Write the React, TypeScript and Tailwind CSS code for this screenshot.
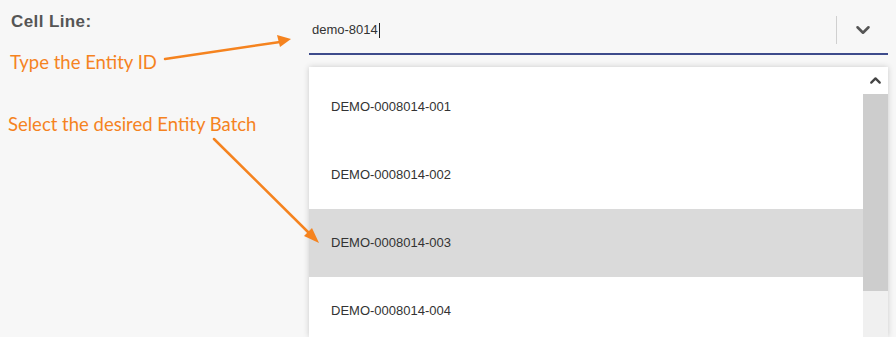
import { ChevronDown, ChevronUp } from 'lucide-react';

const batches = ['DEMO-0008014-001', 'DEMO-0008014-002', 'DEMO-0008014-003', 'DEMO-0008014-004'];

export default function App() {
  const selected = 'DEMO-0008014-003';

  return (
    <div className="relative w-[896px] h-[337px] overflow-hidden bg-[#f7f7f7] font-['Liberation_Sans',Arial,sans-serif]">
      <div className="flex h-full">
        {/* Left column: label and annotations */}
        <div className="w-[309px] shrink-0 pt-[12px] pl-[11px]">
          <h3 className="text-[17px] leading-[20px] font-bold tracking-[0.4px] text-[#555]">Cell Line:</h3>
          <p className="mt-[19px] -ml-[1px] text-[18.5px] leading-[22px] text-[#f5831f] font-['Lato',sans-serif]">Type the Entity ID</p>
          <p className="mt-[40px] -ml-[3px] text-[18.5px] leading-[22px] text-[#f5831f] font-['Lato',sans-serif]">Select the desired Entity Batch</p>
        </div>

        {/* Right column: combobox */}
        <div className="w-[579px] shrink-0 flex flex-col min-h-0">
          <div className="h-[55px] shrink-0 flex items-center pt-[5px] border-b-2 border-[#3d4b8b]">
            <div className="flex-1 pl-[3px] pt-[2px] text-[13px] text-[#333]">
              demo-8014<span className="inline-block w-px h-[15px] bg-[#222] align-middle ml-px" />
            </div>
            <div className="w-px h-[28px] bg-[#d0d0d0] mt-[2px]" />
            <div className="w-[51px] flex justify-center pt-[2px] text-[#555]">
              <ChevronDown size={22} strokeWidth={2.8} />
            </div>
          </div>

          <div className="mt-[12px] flex-1 min-h-0 overflow-hidden flex bg-white shadow-[0_0_6px_rgba(0,0,0,0.18)]">
            <ul className="flex-1 pt-[6px]">
              {batches.map((b) => (
                <li
                  key={b}
                  className={`h-[68px] flex items-center pl-[22px] text-[13px] text-[#333] ${b === selected ? 'bg-[#dadada]' : ''}`}
                >
                  {b}
                </li>
              ))}
            </ul>
            <div className="w-[25px] flex flex-col bg-[#f0f0f0]">
              <div className="h-[27px] shrink-0 flex items-center justify-center bg-white text-[#444]">
                <ChevronUp size={17} strokeWidth={3.2} />
              </div>
              <div className="h-[197px] shrink-0 bg-[#cdcdcd]" />
            </div>
          </div>
        </div>
      </div>

      {/* Annotation arrows */}
      <svg className="absolute inset-0 pointer-events-none" width="896" height="337" viewBox="0 0 896 337">
        <g stroke="#f5831f" strokeWidth="2.5" fill="none" strokeLinecap="round">
          <line x1="165" y1="59" x2="280" y2="42" />
          <line x1="214" y1="139" x2="310" y2="234" />
        </g>
        <g fill="#f5831f">
          <polygon points="291,39 277,35 280,47" />
          <polygon points="319,243 304,236 312,228" />
        </g>
      </svg>
    </div>
  );
}
